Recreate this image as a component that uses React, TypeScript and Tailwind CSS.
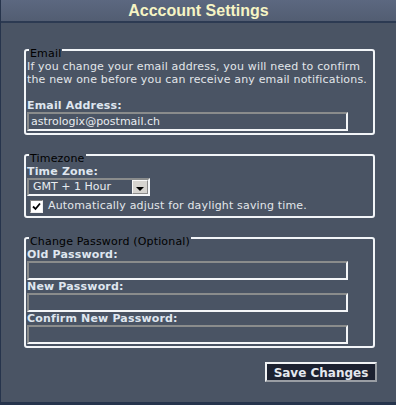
export default function App() {
  const font = { fontFamily: '"DejaVu Sans", Verdana, sans-serif' };
  const inputCls =
    "block h-[19px] w-[321px] border-2 border-t-[#8a8c8c] border-l-[#8a8c8c] border-b-[#f4f6f8] border-r-[#f4f6f8] bg-[#4a5464] px-[2px] text-[11px] tracking-normal text-[#e8ecf0] outline-none";
  const fieldsetCls =
    "w-[351px] rounded-[3px] border-2 border-[#f2f5f8] pb-[2px] pl-[1px] pr-[2px]";
  const legendCls = "ml-[2px] px-[1px] pt-[7px] leading-[13px] text-black";
  const labelCls = "font-bold leading-[13px] text-[#dfe6ef]";
  return (
    <div
      className="relative h-[405px] w-[396px] border-l border-[#26344c] bg-[#4a5464] text-[11px] tracking-[0.17px] text-[#e2e6ea]"
      style={font}
    >
      <div className="flex h-[23px] items-center justify-center border-b-2 border-[#2c3a52] bg-gradient-to-b from-[#5c6880] to-[#525d72]">
        <h1 className="font-['Liberation_Sans',Arial,sans-serif] text-[16px] font-bold tracking-normal text-[#f6f4c4]">
          Acccount Settings
        </h1>
      </div>

      <div className="flex flex-col px-[23px] pt-[17px]">
        <fieldset className={fieldsetCls}>
          <legend className={legendCls}>Email</legend>
          <p className="leading-[13px]">
            If you change your email address, you will need to confirm the new one before you can receive any email notifications.
          </p>
          <div className={`mt-[13px] ${labelCls}`}>Email Address:</div>
          <input className={inputCls} defaultValue="astrologix@postmail.ch" style={font} />
        </fieldset>

        <fieldset className={`mt-[10px] ${fieldsetCls}`}>
          <legend className={legendCls}>Timezone</legend>
          <div className={labelCls}>Time Zone:</div>
          <div className="flex h-[18px] w-[123px] items-center border-2 border-t-[#8a8c8c] border-l-[#8a8c8c] border-b-[#f4f6f8] border-r-[#f4f6f8] bg-[#4a5464]">
            <span className="flex-1 pl-[4px] tracking-normal text-[#e8ecf0]">GMT + 1 Hour</span>
            <span className="flex h-[14px] w-[16px] items-center justify-center border border-t-[#f8f8f8] border-l-[#f8f8f8] border-b-[#8a8a8a] border-r-[#8a8a8a] bg-[#d6d4d0]">
              <span className="mt-[3px] h-0 w-0 border-x-[4px] border-t-[4px] border-x-transparent border-t-black" />
            </span>
          </div>
          <label className="mt-[2px] flex h-[16px] items-center gap-[5px]">
            <span className="ml-[3px] flex h-[13px] w-[13px] items-center justify-center border border-t-[#808080] border-l-[#808080] border-b-[#f0f0f0] border-r-[#f0f0f0] bg-white">
              <svg width="9" height="9" viewBox="0 0 9 9">
                <path d="M1 4.5 L3.5 7 L8 1.5" stroke="#000" strokeWidth="1.8" fill="none" />
              </svg>
            </span>
            <span>Automatically adjust for daylight saving time.</span>
          </label>
        </fieldset>

        <fieldset className={`mt-[10px] ${fieldsetCls}`}>
          <legend className={legendCls}>Change Password (Optional)</legend>
          <div className={labelCls}>Old Password:</div>
          <input type="password" className={inputCls} />
          <div className={labelCls}>New Password:</div>
          <input type="password" className={inputCls} />
          <div className={labelCls}>Confirm New Password:</div>
          <input type="password" className={inputCls} />
        </fieldset>

        <div className="mt-[14px] flex w-[353px] justify-end">
          <button
            className="h-[20px] w-[112px] border-2 border-t-[#f0f2f4] border-l-[#f0f2f4] border-b-[#9a9ea4] border-r-[#9a9ea4] bg-[#1c2130] text-[12px] font-bold tracking-normal text-[#e4e8ee]"
            style={font}
          >
            Save Changes
          </button>
        </div>
      </div>
      <div className="absolute bottom-0 left-0 right-0 h-[3px] bg-[#26344c]" />
    </div>
  );
}
